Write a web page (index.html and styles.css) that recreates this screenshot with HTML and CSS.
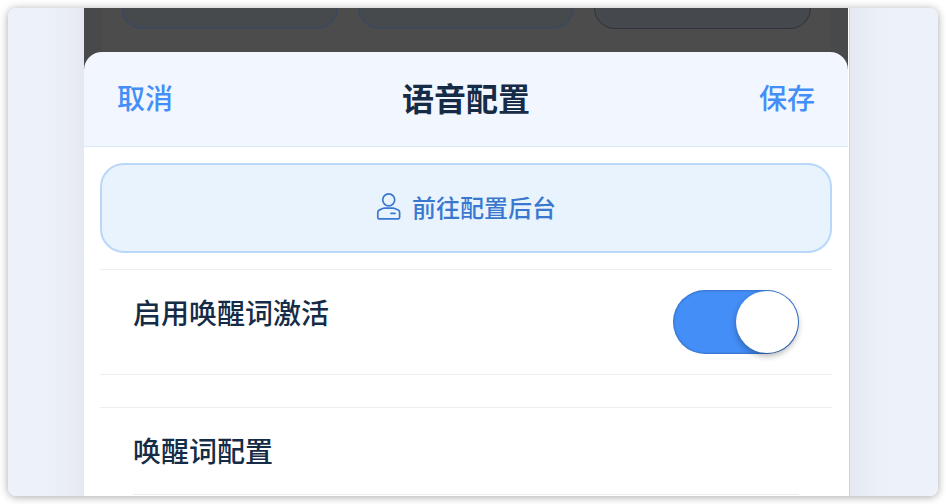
FILE: index.html
```html
<!DOCTYPE html>
<html lang="zh-CN">
<head>
<meta charset="utf-8">
<meta name="viewport" content="width=device-width, initial-scale=1">
<title>语音配置</title>
<link rel="stylesheet" href="styles.css">
</head>
<body>
<main class="frame">
  <div class="gutter gutter-left"></div>
  <div class="phone">
    <div class="backdrop">
      <div class="page">
        <div class="card"></div>
        <div class="card"></div>
        <div class="card card-plain"></div>
      </div>
    </div>
    <section class="sheet" aria-labelledby="sheet-title">
      <header class="sheet-header">
        <button class="action" type="button">取消</button>
        <h1 class="title" id="sheet-title">语音配置</h1>
        <button class="action action-end" type="button">保存</button>
      </header>
      <div class="sheet-body">
        <button class="console" type="button">
          <svg class="icon" viewBox="0 0 26 30" aria-hidden="true">
            <circle cx="12.7" cy="7.8" r="6"/>
            <path d="M1.8 25.6v-5.4c0-1 .5-1.7 1.4-2.1l3.4-1.6c.6-.3 1-.4 1.7-.4h8.8c.7 0 1.1.1 1.7.4l3.4 1.6c.9.4 1.4 1.1 1.4 2.1v5.4c0 .8-.4 1.2-1.2 1.2H3c-.8 0-1.2-.4-1.2-1.2zM15 21.4h4"/>
          </svg>
          <span>前往配置后台</span>
        </button>
        <div class="group group-switch">
          <label class="label" for="wake">启用唤醒词激活</label>
          <input class="switch" id="wake" type="checkbox" role="switch" checked>
        </div>
        <div class="group">
          <h2 class="label">唤醒词配置</h2>
          <div class="rule"></div>
        </div>
      </div>
    </section>
  </div>
  <div class="gutter gutter-right"></div>
</main>
</body>
</html>
```
FILE: styles.css
```css
* {
  box-sizing: border-box;
}

body {
  margin: 0;
  padding: 8px;
  background: #fff;
  color: #152b46;
  font-family: "Noto Sans CJK SC", sans-serif;
  font-weight: 500;
}

button {
  margin: 0;
  border: 0;
  background: none;
  font-family: inherit;
  font-weight: inherit;
  cursor: pointer;
}

.frame {
  display: grid;
  grid-template-columns: 76px 1fr 88px;
  height: calc(100vh - 16px);
  overflow: hidden;
  border-radius: 8px;
  background: #edf1fa;
  box-shadow: 0 1px 8px rgba(0, 0, 0, 0.35);
}

.gutter-left {
  background: linear-gradient(to left, #e5e8f1, #e9edf6 16px, #edf1fa 40px);
}

.gutter-right {
  background: linear-gradient(to right, #e5e8f1, #e9edf6 16px, #edf1fa 40px);
}

.phone {
  min-width: 0;
  overflow: hidden;
  padding-right: 1px;
  border-right: 1px solid #d0d1d5;
  background: #fff;
}

.backdrop {
  height: 64px;
  padding: 0 18px;
  background: #48494b;
}

.page {
  display: grid;
  grid-template-columns: repeat(3, 1fr);
  gap: 20px;
  height: 100%;
  padding: 0 19px 43px;
  background: #4c4c4c;
}

.card {
  border: 2px solid #3d495b;
  border-top: 0;
  border-radius: 0 0 24px 24px;
  background: #464a4d;
}

.card-plain {
  border: 1px solid #30353d;
  border-top: 0;
  background: #45484c;
}

.sheet {
  position: relative;
  z-index: 0;
  margin-top: -20px;
}

/* Backdrop colour shows behind the rounded top corners. */
.sheet::before {
  content: "";
  position: absolute;
  z-index: -1;
  inset: 0 0 auto;
  height: 20px;
  background: #48494b;
}

.sheet-header {
  display: grid;
  grid-template-columns: 1fr auto 1fr;
  align-items: center;
  height: 95px;
  padding: 0 33px 4px;
  border-bottom: 1px solid #dce9f8;
  border-radius: 18px 18px 0 0;
  background: #f2f6fe;
}

.action {
  justify-self: start;
  padding: 0;
  color: #448ef7;
  font-size: 28px;
  line-height: 40px;
}

.action-end {
  justify-self: end;
}

.title {
  margin: 0;
  font-size: 32px;
  font-weight: 700;
  line-height: 48px;
}

.sheet-body {
  padding: 16px 16px 0;
  background: #fff;
}

.console {
  display: flex;
  align-items: center;
  justify-content: center;
  gap: 10px;
  width: 100%;
  height: 90px;
  margin-bottom: 16px;
  padding: 0 0 2px;
  border: 2px solid #b9d7fb;
  border-radius: 24px;
  background: #e8f3fe;
  color: #3a78d0;
  font-size: 24px;
  line-height: 36px;
}

.icon {
  width: 26px;
  height: 30px;
  fill: none;
  stroke: currentColor;
  stroke-width: 1.7;
  stroke-linecap: round;
  stroke-linejoin: round;
}

.group {
  padding: 20px 33px 0;
  border-top: 1px solid #eee;
}

.group-switch {
  display: flex;
  align-items: flex-start;
  justify-content: space-between;
  margin-bottom: 32px;
  padding: 20px 33px;
  border-bottom: 1px solid #eee;
}

.label {
  margin: 0;
  font-size: 28px;
  font-weight: inherit;
  line-height: 44px;
}

.rule {
  margin-top: 22px;
  border-top: 1px solid #eee;
}

.switch {
  appearance: none;
  display: flex;
  align-items: center;
  width: 126px;
  height: 64px;
  margin: 0;
  padding: 0 1px;
  border-radius: 32px;
  background: #ccc;
  box-shadow: inset 0 0 2px 1px rgba(0, 0, 0, 0.2);
  cursor: pointer;
}

.switch::before {
  content: "";
  width: 62px;
  height: 62px;
  border-radius: 50%;
  background: #fff;
  box-shadow: 0 3px 6px rgba(0, 0, 0, 0.3);
}

.switch:checked {
  justify-content: flex-end;
  background: #448ef7;
}
```
